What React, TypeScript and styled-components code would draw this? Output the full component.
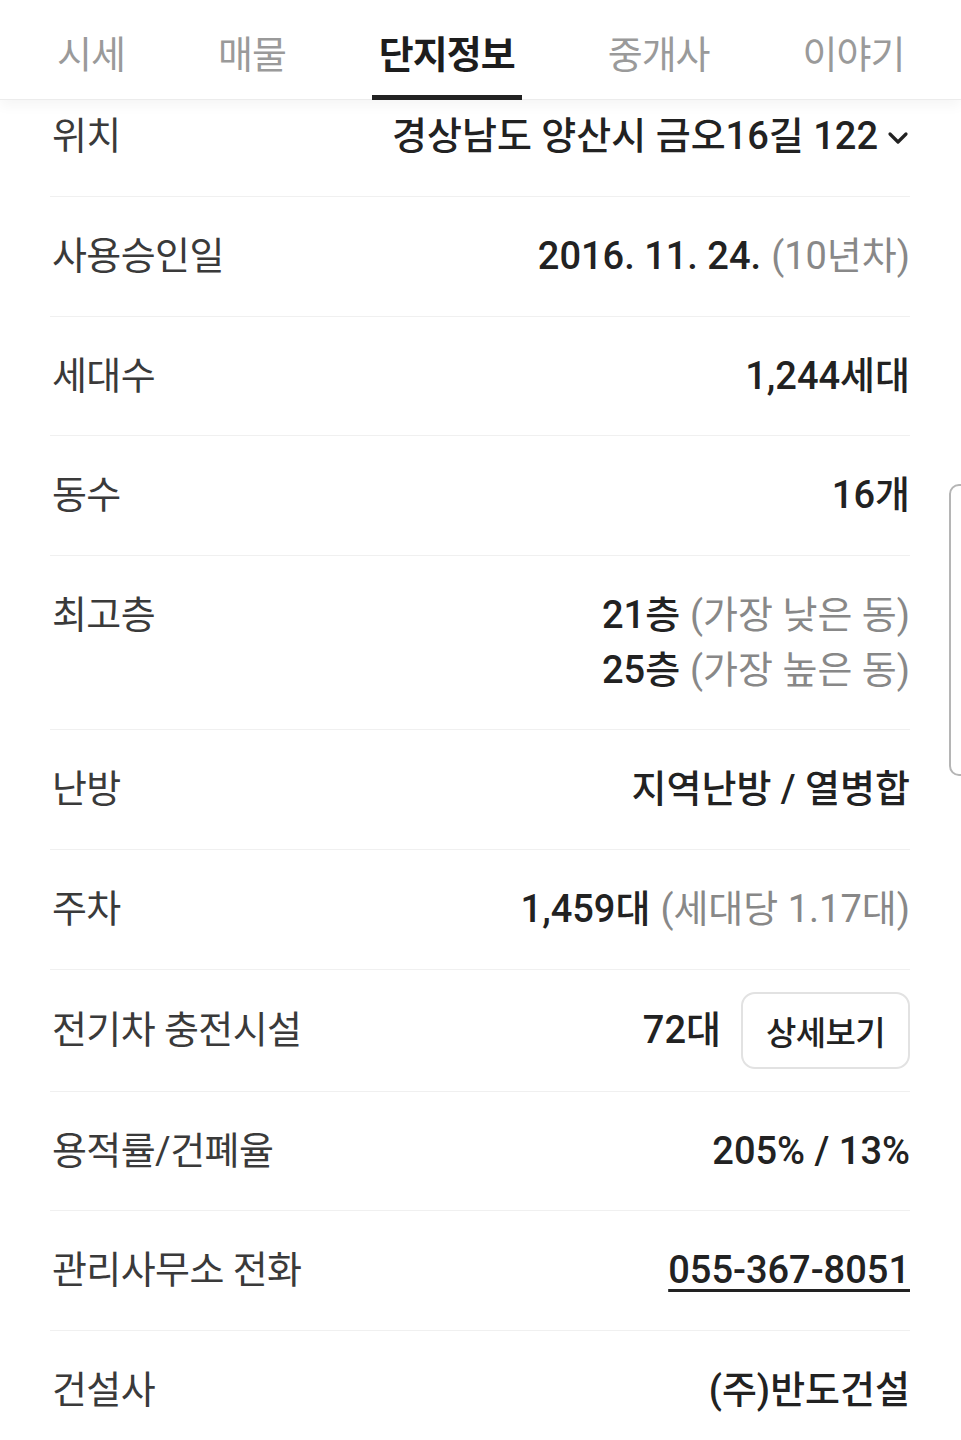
import React from "react";
import styled, { createGlobalStyle } from "styled-components";

const Global = createGlobalStyle`
  html, body { margin: 0; padding: 0; background: #fff; }
  body {
    font-family: Roboto, "Noto Sans CJK KR", "Noto Sans", sans-serif;
    color: #222;
    -webkit-font-smoothing: antialiased;
  }
  * { box-sizing: border-box; }
`;

const Page = styled.div`
  position: relative;
  width: 961px;
  height: 1440px;
  overflow: hidden;
  background: #fff;
`;

const TabBar = styled.nav`
  position: relative;
  z-index: 2;
  height: 100px;
  display: flex;
  align-items: stretch;
  gap: 79px;
  padding: 0 0 0 50px;
  background: #fff;
  border-bottom: 1px solid #ececec;
  box-shadow: 0 6px 12px rgba(0, 0, 0, 0.04);
`;

const Tab = styled.div<{ $active?: boolean }>`
  position: relative;
  display: flex;
  align-items: center;
  padding: 3px 7px 0;
  font-size: 38px;
  letter-spacing: -1px;
  font-weight: ${(p) => (p.$active ? 700 : 400)};
  color: ${(p) => (p.$active ? "#1d1d1d" : "#9a9a9a")};
  &::after {
    content: "";
    display: ${(p) => (p.$active ? "block" : "none")};
    position: absolute;
    left: 0;
    right: 0;
    bottom: -1px;
    height: 5px;
    background: #222;
  }
`;

const List = styled.div`
  margin-top: -22.6px;
  padding: 0 51px 0 50px;
`;

const Row = styled.div<{ $compact?: boolean }>`
  display: flex;
  justify-content: space-between;
  align-items: ${(p) => (p.$compact ? "center" : "flex-start")};
  padding: ${(p) => (p.$compact ? "22.5px 0 21.5px" : "32px 0 31.6px")};
  border-bottom: 1px solid #f0f0f0;
  &:last-child { border-bottom: none; }
`;

const Label = styled.div`
  font-size: 38px;
  line-height: 55px;
  letter-spacing: -0.6px;
  color: #3a3a3a;
  padding-left: 2px;
`;

const Value = styled.div`
  display: flex;
  flex-direction: column;
  align-items: flex-end;
  font-size: 38px;
  line-height: 55px;
  letter-spacing: 0;
  font-weight: 500;
  color: #222;
  text-align: right;
`;

const Line = styled.div`
  display: flex;
  align-items: center;
  white-space: nowrap;
`;

const Sub = styled.span`
  font-weight: 400;
  color: #888;
  margin-left: 10px;
`;

const Phone = styled.span`
  text-decoration: underline;
  text-decoration-thickness: 3px;
  text-underline-offset: 6px;
`;

const Chevron = styled.svg`
  width: 24px;
  height: 24px;
  margin-left: 8px;
  margin-top: 2px;
`;

const Inline = styled.div`
  display: flex;
  align-items: center;
  gap: 20px;
  font-size: 38px;
  line-height: 55px;
  font-weight: 500;
  letter-spacing: 0;
`;

const DetailButton = styled.button`
  height: 77px;
  padding: 0 23px;
  border: 2px solid #e2e2e2;
  border-radius: 14px;
  background: #fff;
  font-family: inherit;
  font-size: 33px;
  font-weight: 500;
  letter-spacing: -0.6px;
  color: #222;
`;

const SideHandle = styled.div`
  position: absolute;
  right: -14px;
  top: 484px;
  width: 26px;
  height: 292px;
  border: 2px solid #b5b5b5;
  border-radius: 10px;
  background: #fff;
`;

const tabs = ["시세", "매물", "단지정보", "중개사", "이야기"];

export default function App() {
  return (
    <Page>
      <Global />
      <TabBar>
        {tabs.map((t) => (
          <Tab key={t} $active={t === "단지정보"}>
            {t}
          </Tab>
        ))}
      </TabBar>
      <List>
        <Row>
          <Label>위치</Label>
          <Value>
            <Line>
              경상남도 양산시 금오16길 122
              <Chevron viewBox="0 0 24 24" fill="none" stroke="#222" strokeWidth="3.2" strokeLinecap="round" strokeLinejoin="round">
                <path d="M4 8l8 8 8-8" />
              </Chevron>
            </Line>
          </Value>
        </Row>
        <Row>
          <Label>사용승인일</Label>
          <Value>
            <Line>
              2016. 11. 24.<Sub>(10년차)</Sub>
            </Line>
          </Value>
        </Row>
        <Row>
          <Label>세대수</Label>
          <Value>
            <Line>1,244세대</Line>
          </Value>
        </Row>
        <Row>
          <Label>동수</Label>
          <Value>
            <Line>16개</Line>
          </Value>
        </Row>
        <Row>
          <Label>최고층</Label>
          <Value>
            <Line>
              21층<Sub>(가장 낮은 동)</Sub>
            </Line>
            <Line>
              25층<Sub>(가장 높은 동)</Sub>
            </Line>
          </Value>
        </Row>
        <Row>
          <Label>난방</Label>
          <Value>
            <Line>지역난방 / 열병합</Line>
          </Value>
        </Row>
        <Row>
          <Label>주차</Label>
          <Value>
            <Line>
              1,459대<Sub>(세대당 1.17대)</Sub>
            </Line>
          </Value>
        </Row>
        <Row $compact>
          <Label>전기차 충전시설</Label>
          <Inline>
            72대
            <DetailButton>상세보기</DetailButton>
          </Inline>
        </Row>
        <Row>
          <Label>용적률/건폐율</Label>
          <Value>
            <Line>205% / 13%</Line>
          </Value>
        </Row>
        <Row>
          <Label>관리사무소 전화</Label>
          <Value>
            <Line>
              <Phone>055-367-8051</Phone>
            </Line>
          </Value>
        </Row>
        <Row>
          <Label>건설사</Label>
          <Value>
            <Line>(주)반도건설</Line>
          </Value>
        </Row>
      </List>
      <SideHandle />
    </Page>
  );
}
